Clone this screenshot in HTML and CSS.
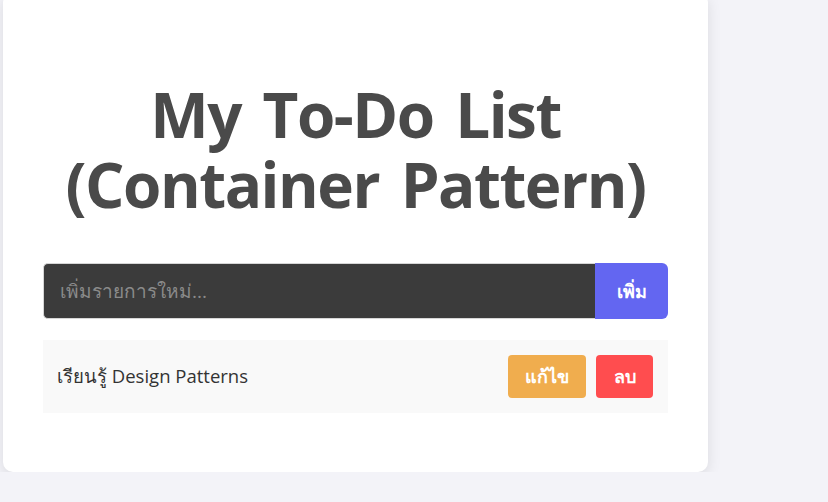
FILE: index.html
```html
<!DOCTYPE html>
<html lang="th">
<head>
<meta charset="utf-8">
<title>My To-Do List</title>
<link rel="stylesheet" href="styles.css">
</head>
<body>
<div class="page">
  <div class="card">
    <h1 class="title">My To-Do List (Container Pattern)</h1>
    <form class="add-form">
      <input class="add-input" type="text" placeholder="เพิ่มรายการใหม่...">
      <button class="add-btn" type="button">เพิ่ม</button>
    </form>
    <ul class="todo-list">
      <li class="todo-item">
        <span class="todo-text">เรียนรู้ Design Patterns</span>
        <div class="actions">
          <button class="btn btn-edit" type="button">แก้ไข</button>
          <button class="btn btn-delete" type="button">ลบ</button>
        </div>
      </li>
    </ul>
  </div>
</div>
</body>
</html>
```

FILE: styles.css
```css
html, body {
  margin: 0;
  padding: 0;
  background: #f3f3f8;
  font-family: "Open Sans", "Noto Sans", sans-serif;
  overflow: hidden;
}
.page {
  padding-left: 3px;
  margin-top: -7px;
}
.card {
  width: 625px;
  background: #fff;
  border-radius: 10px;
  box-shadow: 0 4px 14px rgba(0,0,0,0.1);
  padding: 86px 40px 59px;
}
.title {
  margin: 0 0 44px;
  text-align: center;
  font-size: 62px;
  line-height: 70px;
  letter-spacing: -1.5px;
  word-spacing: 7px;
  font-weight: 700;
  color: #4a4a4a;
}
.add-form {
  display: flex;
  margin: 0 0 21px;
}
.add-input {
  flex: 1;
  height: 56px;
  box-sizing: border-box;
  background: #3b3b3b;
  border: 1px solid #d6d6d6;
  border-right: none;
  border-radius: 5px 0 0 5px;
  padding: 0 16px;
  font-family: inherit;
  font-size: 19px;
  color: #eee;
  outline: none;
}
.add-input::placeholder { color: #8a8a8a; }
.add-btn {
  width: 73px;
  height: 56px;
  background: #6366f1;
  color: #fff;
  border: none;
  border-radius: 0 6px 6px 0;
  font-family: inherit;
  font-size: 18px;
  font-weight: 700;
}
.todo-list {
  list-style: none;
  margin: 0;
  padding: 0;
}
.todo-item {
  display: flex;
  align-items: center;
  justify-content: space-between;
  background: #f9f9f9;
  height: 73px;
  padding: 0 15px 0 14px;
}
.todo-text {
  font-size: 18.5px;
  color: #333;
}
.actions {
  display: flex;
  gap: 10px;
}
.btn {
  height: 43px;
  padding: 0 12px;
  border: none;
  border-radius: 4px;
  color: #fff;
  font-family: inherit;
  font-size: 18px;
  font-weight: 700;
}
.btn-edit { background: #f0ad4e; width: 78px; }
.btn-delete { background: #ff4d4f; width: 57px; }
```
